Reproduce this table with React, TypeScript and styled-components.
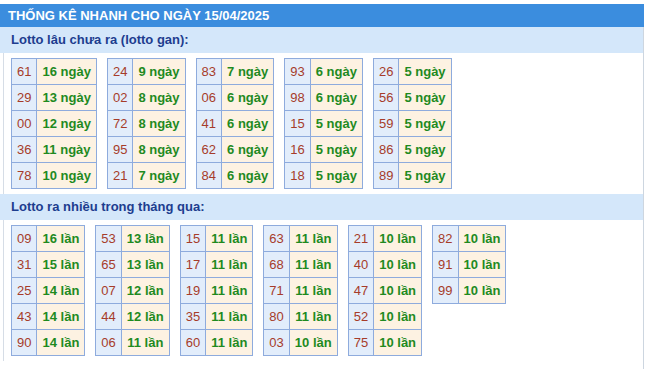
import React from 'react';
import styled, { createGlobalStyle } from 'styled-components';

const GlobalStyle = createGlobalStyle`
  body {
    margin: 0;
    background: #ffffff;
    font-family: 'Liberation Sans', Arial, sans-serif;
  }
`;

const Panel = styled.div`
  width: 644px;
  padding-top: 4px;
`;

const Title = styled.div`
  height: 23px;
  line-height: 23px;
  background-color: #3b8dde;
  color: #ffffff;
  font-size: 13px;
  font-weight: bold;
  padding-left: 8px;
  text-transform: uppercase;
`;

const Body = styled.div`
  border-right: 1px solid #cdd6e0;
  padding-bottom: 9px;
`;

const SubTitle = styled.div`
  height: 26px;
  line-height: 26px;
  background-color: #d4e7fa;
  color: #1d3d8f;
  font-size: 13px;
  font-weight: bold;
  padding-left: 11px;
`;

const TableRow = styled.div`
  display: flex;
  align-items: flex-start;
  gap: 10px;
  margin: 0 0 0 3px;
  padding: 5px 0 5px 7px;
  border-left: 1px solid #d6dde6;
`;

const LottoTable = styled.table`
  border-collapse: collapse;
  font-size: 13px;
`;

const NumCell = styled.td`
  height: 25px;
  padding: 0 5px;
  border: 1px solid #8eabdd;
  background-color: #e2edfb;
  color: #a63c2a;
  text-align: center;
`;

const ValueCell = styled.td`
  height: 25px;
  padding: 0 5px;
  border: 1px solid #8eabdd;
  background-color: #fdf2e2;
  color: #1f8a1f;
  font-weight: bold;
  text-align: center;
`;

type Pair = [string, number];

const ganTables: Pair[][] = [
  [['61', 16], ['29', 13], ['00', 12], ['36', 11], ['78', 10]],
  [['24', 9], ['02', 8], ['72', 8], ['95', 8], ['21', 7]],
  [['83', 7], ['06', 6], ['41', 6], ['62', 6], ['84', 6]],
  [['93', 6], ['98', 6], ['15', 5], ['16', 5], ['18', 5]],
  [['26', 5], ['56', 5], ['59', 5], ['86', 5], ['89', 5]],
];

const hotTables: Pair[][] = [
  [['09', 16], ['31', 15], ['25', 14], ['43', 14], ['90', 14]],
  [['53', 13], ['65', 13], ['07', 12], ['44', 12], ['06', 11]],
  [['15', 11], ['17', 11], ['19', 11], ['35', 11], ['60', 11]],
  [['63', 11], ['68', 11], ['71', 11], ['80', 11], ['03', 10]],
  [['21', 10], ['40', 10], ['47', 10], ['52', 10], ['75', 10]],
  [['82', 10], ['91', 10], ['99', 10]],
];

const StatTable = ({ rows, unit }: { rows: Pair[]; unit: string }) => (
  <LottoTable>
    <tbody>
      {rows.map(([num, count]) => (
        <tr key={num}>
          <NumCell>{num}</NumCell>
          <ValueCell>
            {count} {unit}
          </ValueCell>
        </tr>
      ))}
    </tbody>
  </LottoTable>
);

const App = (): React.ReactElement => {
  return (
    <Panel>
      <GlobalStyle />
      <Title>Thống kê nhanh cho ngày 15/04/2025</Title>
      <Body>
        <SubTitle>Lotto lâu chưa ra (lotto gan):</SubTitle>
        <TableRow>
          {ganTables.map((rows, i) => (
            <StatTable key={i} rows={rows} unit='ngày' />
          ))}
        </TableRow>
        <SubTitle>Lotto ra nhiều trong tháng qua:</SubTitle>
        <TableRow>
          {hotTables.map((rows, i) => (
            <StatTable key={i} rows={rows} unit='lần' />
          ))}
        </TableRow>
      </Body>
    </Panel>
  );
};

export default App;
